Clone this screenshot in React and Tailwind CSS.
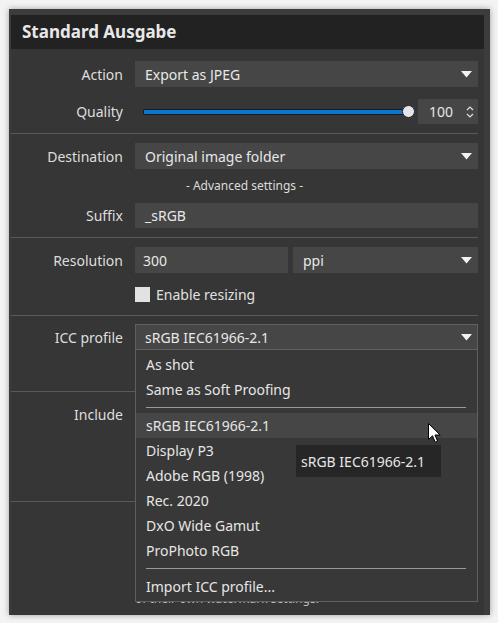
import React from "react";

const FONT = { fontFamily: '"Segoe UI", "Noto Sans", "Open Sans", sans-serif' };

function Caret() {
  return (
    <svg width="11" height="7" viewBox="0 0 11 7" className="shrink-0">
      <path d="M0 0 H11 L5.5 6.5 Z" fill="#f2f2f2" />
    </svg>
  );
}

function Select({ value, open }) {
  return (
    <div
      className={`flex h-[26px] items-center justify-between bg-[#464646] text-[14px] text-[#e8e8e8] ${
        open ? "border border-[#5f5f5f] pl-[9px] pr-[5px]" : "pl-[10px] pr-[6px]"
      }`}
    >
      <span>{value}</span>
      <Caret />
    </div>
  );
}

function Label({ children }) {
  return <div className="w-[112px] shrink-0 text-right text-[14px] text-[#dedede]">{children}</div>;
}

function Row({ label, children, className = "" }) {
  return (
    <div className={`flex items-center gap-[12px] ${className}`}>
      <Label>{label}</Label>
      <div className="min-w-0 flex-1">{children}</div>
    </div>
  );
}

function Divider({ className = "" }) {
  return <div className={`h-px bg-[#5a5a5a] ${className}`} />;
}

function Item({ children, active }) {
  return (
    <div
      className={`flex h-[25px] items-center pl-[10px] text-[14px] text-[#e6e6e6] ${
        active ? "bg-[#464646]" : ""
      }`}
    >
      {children}
    </div>
  );
}

function Sep() {
  return (
    <div className="flex h-[11px] items-center pl-[10px] pr-[11px]">
      <div className="h-px flex-1 bg-[#9a9a9a]" />
    </div>
  );
}

export default function App() {
  return (
    <div className="h-[623px] w-[498px] bg-[#f3f3f3] pl-[9px] pt-[9px]" style={FONT}>
      <div className="relative h-[606px] w-[481px] bg-[#3c3c3c] pl-[2px] pr-[6px] pt-[6px] shadow-[0_0_6px_rgba(0,0,0,0.35)]">
        <div className="h-full overflow-hidden bg-[#363636]">
          {/* Header */}
          <div className="flex h-[34px] items-center bg-[#222222] pl-[11px] text-[17px] font-bold text-[#e8e8e8]">
            Standard Ausgabe
          </div>

          <div className="flex flex-col pr-[6px]">
            <Row label="Action" className="mt-[12px]">
              <Select value="Export as JPEG" />
            </Row>

            <Row label="Quality" className="mt-[12px]">
              <div className="flex items-center gap-[6px]">
                <div className="relative flex h-[25px] flex-1 items-center pl-[8px] pr-[2px]">
                  <div className="h-[6px] flex-1 rounded-[1px] border border-[#1c1c1c] bg-[#0b74d4]" />
                  <div className="absolute right-[-3px] top-[6px] h-[13px] w-[13px] rounded-full border border-[#2a2a2a] bg-[#e4e4ec]" />
                </div>
                <div className="flex h-[25px] w-[60px] items-center justify-between bg-[#464646] pl-[11px] pr-[4px] text-[14px] text-[#e8e8e8]">
                  <span>100</span>
                  <svg width="8" height="14" viewBox="0 0 8 14">
                    <path d="M1 5 L4 2 L7 5" fill="none" stroke="#e0e0e0" strokeWidth="1.2" />
                    <path d="M1 9 L4 12 L7 9" fill="none" stroke="#e0e0e0" strokeWidth="1.2" />
                  </svg>
                </div>
              </div>
            </Row>

            <Divider className="mt-[9px]" />

            <Row label="Destination" className="mt-[9px]">
              <Select value="Original image folder" />
            </Row>

            <div className="flex h-[34px] items-center justify-center text-[12px] text-[#dcdcdc]">
              - Advanced settings -
            </div>

            <Row label="Suffix">
              <div className="flex h-[25px] items-center bg-[#464646] pl-[10px] text-[14px] text-[#e8e8e8]">_sRGB</div>
            </Row>

            <Divider className="mt-[9px]" />

            <Row label="Resolution" className="mt-[9px]">
              <div className="flex gap-[5px]">
                <div className="flex h-[26px] w-[153px] items-center bg-[#464646] pl-[8px] text-[14px] text-[#e8e8e8]">300</div>
                <div className="flex-1">
                  <Select value="ppi" />
                </div>
              </div>
            </Row>

            <Row label="" className="mt-[11px]">
              <div className="flex h-[21px] items-center gap-[6px] text-[14px] text-[#e0e0e0]">
                <div className="h-[15px] w-[15px] bg-[#e2e2e2]" />
                <span>Enable resizing</span>
              </div>
            </Row>

            <Divider className="mt-[10px]" />

            <Row label="ICC profile" className="mt-[8px]">
              <Select value="sRGB IEC61966-2.1" open />
            </Row>

            <Divider className="mt-[41px] w-[124px]" />

            <Row label="Include" className="mt-[12px]">
              <div className="h-[16px]" />
            </Row>

            <Divider className="mt-[76px] w-[124px]" />

            <div className="mt-[88px] pl-[124px] text-[12px] leading-[18px] text-[#bcbcbc]">
              of their own watermark settings.
            </div>
          </div>
        </div>

        {/* Dropdown list */}
        <div className="absolute left-[126px] top-[341px] w-[343px] border border-t-0 border-[#5f5f5f] bg-[#383838] pb-[2px] pt-[2px]">
          <Item>As shot</Item>
          <Item>Same as Soft Proofing</Item>
          <Sep />
          <Item active>sRGB IEC61966-2.1</Item>
          <Item>Display P3</Item>
          <Item>Adobe RGB (1998)</Item>
          <Item>Rec. 2020</Item>
          <Item>DxO Wide Gamut</Item>
          <Item>ProPhoto RGB</Item>
          <Sep />
          <Item>Import ICC profile...</Item>
        </div>

        {/* Tooltip */}
        <div className="absolute left-[287px] top-[436px] flex h-[32px] w-[145px] items-center bg-[#262626] pl-[5px] text-[14px] text-[#e6e6e6]">
          sRGB IEC61966-2.1
        </div>

        {/* Cursor */}
        <svg className="absolute left-[419px] top-[414px]" width="13" height="21" viewBox="0 0 13 21">
          <path
            d="M0.5 0.5 L0.5 16.5 L4.5 12.8 L7.2 19.2 L9.6 18.2 L7 12 L12.2 12 Z"
            fill="#ffffff"
            stroke="#000000"
            strokeWidth="1"
            strokeLinejoin="miter"
          />
        </svg>
      </div>
    </div>
  );
}
